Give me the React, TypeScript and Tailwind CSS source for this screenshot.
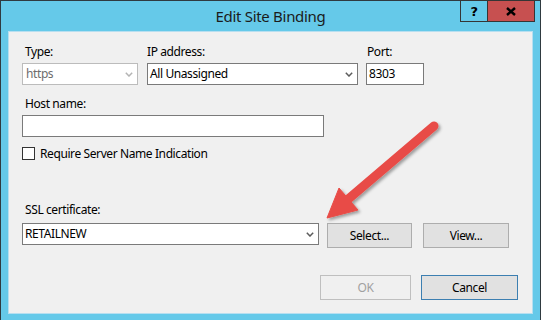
import React from 'react';

const font = "font-['Noto_Sans',sans-serif]";

function Chevron({ color }: { color: string }) {
    return (
        <svg width="8" height="5" viewBox="0 0 8 5" className="shrink-0">
            <path d="M0.8 0.8 L4 4 L7.2 0.8" fill="none" stroke={color} strokeWidth="1.5" />
        </svg>
    );
}

function Combo({
    value,
    width,
    disabled,
}: {
    value: string;
    width: string;
    disabled?: boolean;
}) {
    return (
        <div
            className={`${width} h-[22px] flex items-center justify-between bg-white border pr-[4px] ${
                disabled ? 'border-[#bcbcbc] text-[#6d6d6d] pl-[3px]' : 'border-[#7a7a7a] text-black pl-[2px]'
            }`}
        >
            <span className="leading-[16px]">{value}</span>
            <Chevron color={disabled ? '#b4b4b4' : '#5c5c5c'} />
        </div>
    );
}

function Button({
    label,
    width,
    variant = 'normal',
}: {
    label: string;
    width: string;
    variant?: 'normal' | 'disabled' | 'default';
}) {
    const look =
        variant === 'disabled'
            ? 'bg-[#f0f0f0] border-[#bfbfbf] text-[#a0a0a0]'
            : variant === 'default'
              ? 'bg-[#e1e1e1] border-[#3c7fb1] text-black'
              : 'bg-[#e1e1e1] border-[#adadad] text-black';
    return (
        <div className={`${width} h-[25px] border flex items-center justify-center leading-[16px] ${look}`}>
            {label}
        </div>
    );
}

function Arrow() {
    return (
        <svg className="absolute inset-0 pointer-events-none" width="541" height="320" viewBox="0 0 541 320">
            <defs>
                <filter id="arrowShadow" x="-20%" y="-20%" width="140%" height="140%">
                    <feDropShadow dx="2" dy="2" stdDeviation="1.6" floodColor="#000" floodOpacity="0.35" />
                </filter>
            </defs>
            <g filter="url(#arrowShadow)" fill="#e84c47" stroke="#e84c47">
                <line x1="433" y1="125" x2="345" y2="200" strokeWidth="9" strokeLinecap="round" />
                <polygon points="326,217 338,187 357,209" strokeWidth="1" strokeLinejoin="round" />
            </g>
        </svg>
    );
}

export default function App() {
    return (
        <div className={`relative w-[541px] h-[320px] bg-[#65c9e9] border-l border-t border-r border-[#2f3a40] flex flex-col text-[12px] tracking-[-0.4px] ${font}`}>
            {/* title bar */}
            <div className="relative h-[30px] shrink-0 flex justify-center pt-[5px]">
                <span className="text-[15px] leading-[20px] tracking-[-0.3px] text-[#1b1b1b]">Edit Site Binding</span>
                <div className="absolute top-[-1px] right-[5px] flex h-[22px] border border-[#353535]">
                    <div className="w-[27px] border-r border-[#353535] flex items-center justify-center">
                        <span className="font-['DejaVu_Sans',sans-serif] font-bold text-[13px] leading-none text-black">?</span>
                    </div>
                    <div className="w-[46px] bg-[#c75050] flex items-center justify-center">
                        <svg width="10" height="9" viewBox="0 0 10 9">
                            <path d="M1 1 L9 8 M9 1 L1 8" stroke="#000" strokeWidth="2.4" />
                        </svg>
                    </div>
                </div>
            </div>

            {/* client area */}
            <div className="flex-1 mx-[7px] mb-[6px] bg-[#f0f0f0] border border-[#b7dff0] pl-[13px] text-black">
                <div className="flex mt-[12px]">
                    <div className="w-[116px]">
                        <div className="leading-[16px] pl-[3px]">Type:</div>
                        <div className="mt-[3px]">
                            <Combo value="https" width="w-[116px]" disabled />
                        </div>
                    </div>
                    <div className="w-[211px] ml-[9px]">
                        <div className="leading-[16px]">IP address:</div>
                        <div className="mt-[3px]">
                            <Combo value="All Unassigned" width="w-[211px]" />
                        </div>
                    </div>
                    <div className="w-[58px] ml-[8px]">
                        <div className="leading-[16px] pl-[1px]">Port:</div>
                        <div className="mt-[3px] h-[22px] bg-white border border-[#7a7a7a] pl-[2px] flex items-center leading-[16px]">
                            8303
                        </div>
                    </div>
                </div>

                <div className="mt-[11px] leading-[16px] pl-[3px]">Host name:</div>
                <div className="mt-[3px] w-[302px] h-[22px] bg-white border border-[#7a7a7a]" />

                <div className="mt-[10px] flex items-center h-[13px]">
                    <div className="w-[13px] h-[13px] bg-white border border-[#333]" />
                    <span className="ml-[5px] leading-[16px]">Require Server Name Indication</span>
                </div>

                <div className="mt-[42px] leading-[16px] pl-[3px]">SSL certificate:</div>
                <div className="mt-[5px] flex items-start">
                    <Combo value="RETAILNEW" width="w-[297px]" />
                    <div className="ml-[8px]">
                        <Button label="Select..." width="w-[85px]" />
                    </div>
                    <div className="ml-[11px]">
                        <Button label="View..." width="w-[86px]" />
                    </div>
                </div>

                <div className="mt-[27px] flex pl-[298px]">
                    <Button label="OK" width="w-[91px]" variant="disabled" />
                    <div className="ml-[10px]">
                        <Button label="Cancel" width="w-[97px]" variant="default" />
                    </div>
                </div>
            </div>

            <Arrow />
        </div>
    );
}
